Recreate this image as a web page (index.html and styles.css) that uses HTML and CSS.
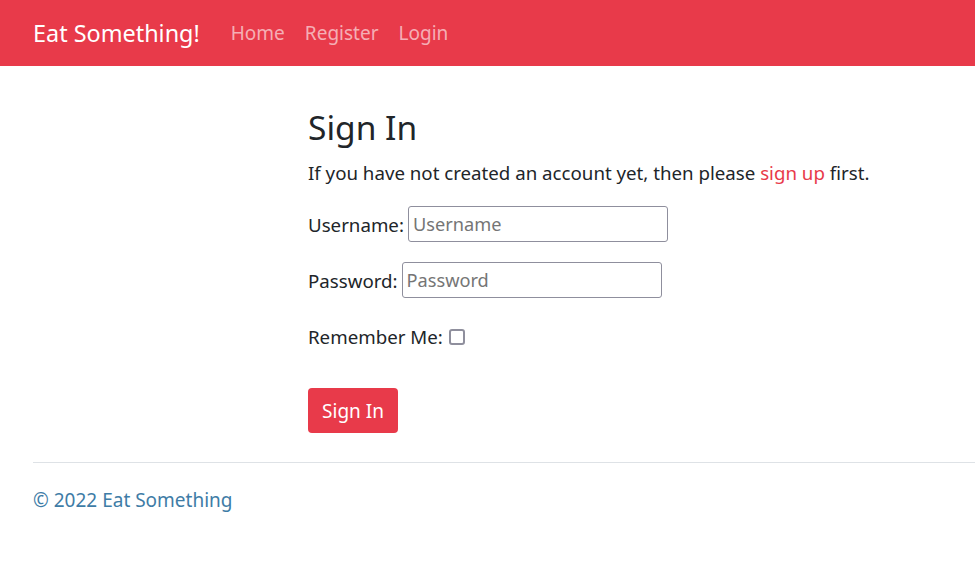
FILE: index.html
```html
<!DOCTYPE html>
<html lang="en">
<head>
<meta charset="utf-8">
<title>Sign In - Eat Something!</title>
<link rel="stylesheet" href="styles.css">
</head>
<body>
<nav class="navbar">
  <a class="brand" href="#">Eat Something!</a>
  <ul class="nav-links">
    <li><a href="#">Home</a></li>
    <li><a href="#">Register</a></li>
    <li><a href="#">Login</a></li>
  </ul>
</nav>
<main class="main">
  <h1 class="title">Sign In</h1>
  <p class="intro">If you have not created an account yet, then please <a href="#" class="link">sign up</a> first.</p>
  <form class="form">
    <div class="field">
      <label for="u">Username:</label>
      <input id="u" class="input" type="text" placeholder="Username">
    </div>
    <div class="field">
      <label for="p">Password:</label>
      <input id="p" class="input" type="password" placeholder="Password">
    </div>
    <div class="field field-check">
      <label for="r">Remember Me:</label>
      <input id="r" class="check" type="checkbox">
    </div>
    <button type="button" class="btn">Sign In</button>
  </form>
</main>
<footer class="footer">
  <p>© 2022 Eat Something</p>
</footer>
</body>
</html>
```
FILE: styles.css
```css
* { box-sizing: border-box; }
body {
  margin: 0;
  font-family: "Noto Sans", "Open Sans", sans-serif;
  font-size: 18.7px;
  color: #212529;
  background: #fff;
}
a { text-decoration: none; }
.navbar {
  height: 66px;
  background: #e83a4a;
  display: flex;
  align-items: center;
  padding-left: 33px;
}
.brand {
  color: #fff;
  font-size: 23.4px;
  margin-right: 21px;
}
.nav-links {
  list-style: none;
  display: flex;
  margin: 0;
  padding: 0;
}
.nav-links a {
  display: block;
  padding: 0 10px;
  color: rgba(255,255,255,0.6);
  font-size: 19px;
}
.main {
  padding-left: 308px;
  padding-top: 38px;
}
.title {
  margin: 0 0 9px;
  font-size: 33.5px;
  font-weight: 400;
  line-height: 46px;
}
.intro { margin: 0 0 19px; line-height: 1.5; }
.link { color: #e83a4a; }
.field {
  display: flex;
  align-items: center;
  gap: 4px;
  min-height: 36px;
  margin-bottom: 20px;
}
.input {
  width: 260px;
  height: 36px;
  border: 1px solid #8f8f9d;
  border-radius: 3px;
  font: inherit;
  font-size: 18.2px;
  padding: 0 4px;
  color: #212529;
}
.input::placeholder { color: #757575; }
.check {
  appearance: none;
  -webkit-appearance: none;
  width: 16px;
  height: 16px;
  margin: 2px 0 0 2px;
  border: 2px solid #8f8f9d;
  border-radius: 3px;
  background: #fff;
}
.field-check { margin-bottom: 34px; }
.btn {
  background: #e83a4a;
  color: #fff;
  border: 0;
  border-radius: 4px;
  font: inherit;
  font-size: 19px;
  width: 90px;
  height: 45px;
  padding: 0;
}
.footer {
  margin: 29px 0 0 33px;
  border-top: 1px solid #dee2e6;
}
.footer p {
  margin: 0;
  padding-top: 24px;
  font-size: 19px;
  color: #3e7ca6;
}
```
